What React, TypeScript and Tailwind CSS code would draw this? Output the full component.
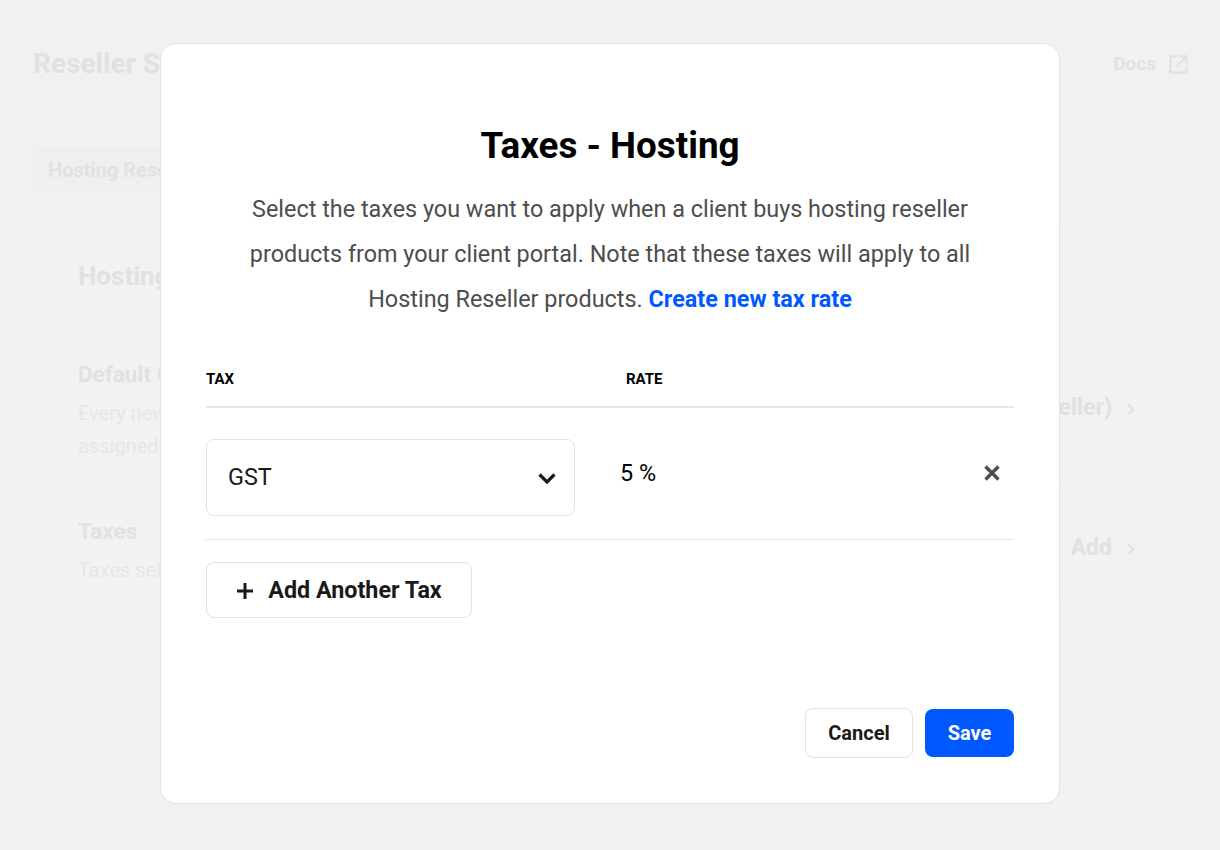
function BgChevron() {
  return (
    <svg viewBox="0 0 8 13" className="mr-[8px] mt-[2px] h-[13px] w-[8px]" fill="none" stroke="#e1e1e1" strokeWidth="2.6">
      <path d="M1.5 1.5 L6 6.5 L1.5 11.5" />
    </svg>
  );
}

function BackgroundPage() {
  return (
    <div className="h-[850px] overflow-hidden bg-[#f1f1f1] pl-[33px] pr-[32px] text-[#e1e1e1]">
      {/* Header */}
      <div className="flex h-[116px] items-start justify-between border-b border-[#efefef] pt-[44px]">
        <h1 className="text-[28px] font-bold leading-[40px]">Reseller Settings</h1>
        <div className="flex items-center gap-[13px] pt-[8px]">
          <span className="text-[19px] font-bold leading-[24px]">Docs</span>
          <svg viewBox="0 0 19 19" className="h-[19px] w-[19px]" fill="none" stroke="#e1e1e1" strokeWidth="2.4">
            <path d="M8 1.5 H1.5 V17.5 H17.5 V11" />
            <path d="M7 12 L17 2 M10.5 1.5 H17.5 V8.5" />
          </svg>
        </div>
      </div>

      {/* Tab */}
      <div className="mt-[32px] flex h-[44px] w-[300px] items-center rounded-lg bg-[#efefef] px-[15px] text-[20px] font-semibold">
        Hosting Reseller
      </div>

      {/* Card */}
      <div className="mt-[31px] h-[384px] rounded-2xl bg-[#f2f2f2] px-[45px]">
        <h2 className="pt-[33px] text-[26px] font-bold leading-[40px]">Hosting Reseller</h2>
        <div className="mt-[63px] flex h-[126px] items-start justify-between border-b border-[#efefef]">
          <div>
            <h3 className="text-[22.5px] font-bold leading-[30px]">Default Group</h3>
            <p className="mt-[8px] text-[20px] leading-[33px] text-[#e6e6e6]">
              Every new client is
              <br />
              assigned to this group
            </p>
          </div>
          <div className="flex items-center gap-[15px] pt-[32px] text-[23px] font-bold">
            <span>(Hosting Reseller)</span>
            <BgChevron />
          </div>
        </div>
        <div className="flex items-start justify-between pt-[31px]">
          <div>
            <h3 className="text-[22.5px] font-bold leading-[30px]">Taxes</h3>
            <p className="mt-[8px] text-[20px] leading-[33px] text-[#e6e6e6]">Taxes selected here</p>
          </div>
          <div className="flex items-center gap-[15px] pt-[15px] text-[23px] font-bold">
            <span>Add</span>
            <BgChevron />
          </div>
        </div>
      </div>
    </div>
  );
}

function TaxModal() {
  return (
    <div className="fixed inset-0 pl-[160px] pt-[43px]">
      <div className="flex h-[761px] w-[900px] flex-col rounded-2xl border border-[#e2e2e2] bg-white px-[45px]">
        <h2 className="mt-[76px] text-center text-[36.8px] font-bold leading-[52px] text-black">Taxes - Hosting</h2>
        <p className="mt-[15px] text-center text-[23.4px] leading-[45px] text-[#4d4d4d]">
          Select the taxes you want to apply when a client buys hosting reseller
          <br />
          products from your client portal. Note that these taxes will apply to all
          <br />
          Hosting Reseller products.{" "}
          <a className="font-bold text-[#0058ff]">Create new tax rate</a>
        </p>

        {/* Table head */}
        <div className="mt-[44px] flex h-[42px] items-start border-b-2 border-[#e6e6e6] pt-[3px] text-[15px] font-bold uppercase leading-[20px] text-black">
          <span className="w-[420px]">Tax</span>
          <span>Rate</span>
        </div>

        {/* Tax row */}
        <div className="flex h-[132px] items-start border-b border-[#e6e6e6] pt-[31px]">
          <div className="flex h-[77px] w-[369px] items-center justify-between rounded-lg border border-[#e2e2e2] pl-[21px] pr-[18px] text-[23.4px] text-[#1a1a1a]">
            <span>GST</span>
            <svg viewBox="0 0 18 11" className="mt-[2px] h-[11px] w-[18px]" fill="none" stroke="#1a1a1a" strokeWidth="3.2">
              <path d="M1.5 1.5 L9 9 L16.5 1.5" />
            </svg>
          </div>
          <span className="ml-[45px] mt-[18px] text-[23.4px] leading-[32px] text-black">5 %</span>
          <svg viewBox="0 0 16 16" className="ml-auto mr-[14px] mt-[26px] h-[16px] w-[16px]" fill="none" stroke="#4d4d4d" strokeWidth="3.4">
            <path d="M1.5 1.5 L14.5 14.5 M14.5 1.5 L1.5 14.5" />
          </svg>
        </div>

        <button className="mt-[22px] flex h-[56px] w-[266px] items-center justify-center gap-[14px] rounded-lg border border-[#e2e2e2] pt-[1px] text-[23.3px] font-bold text-[#1a1a1a]">
          <svg viewBox="0 0 18 18" className="h-[18px] w-[18px]" fill="none" stroke="#1a1a1a" strokeWidth="3">
            <path d="M9 1 V17 M1 9 H17" />
          </svg>
          Add Another Tax
        </button>

        {/* Footer */}
        <div className="mt-[90px] flex items-center justify-end gap-[12px]">
          <button className="h-[50px] w-[108px] rounded-lg border border-[#e2e2e2] text-[20px] font-bold text-[#1a1a1a]">
            Cancel
          </button>
          <button className="h-[48px] w-[89px] rounded-lg bg-[#0058ff] text-[20px] font-bold text-white">
            Save
          </button>
        </div>
      </div>
    </div>
  );
}

export default function App() {
  return (
    <div className="font-['Roboto',sans-serif]">
      <BackgroundPage />
      <TaxModal />
    </div>
  );
}
